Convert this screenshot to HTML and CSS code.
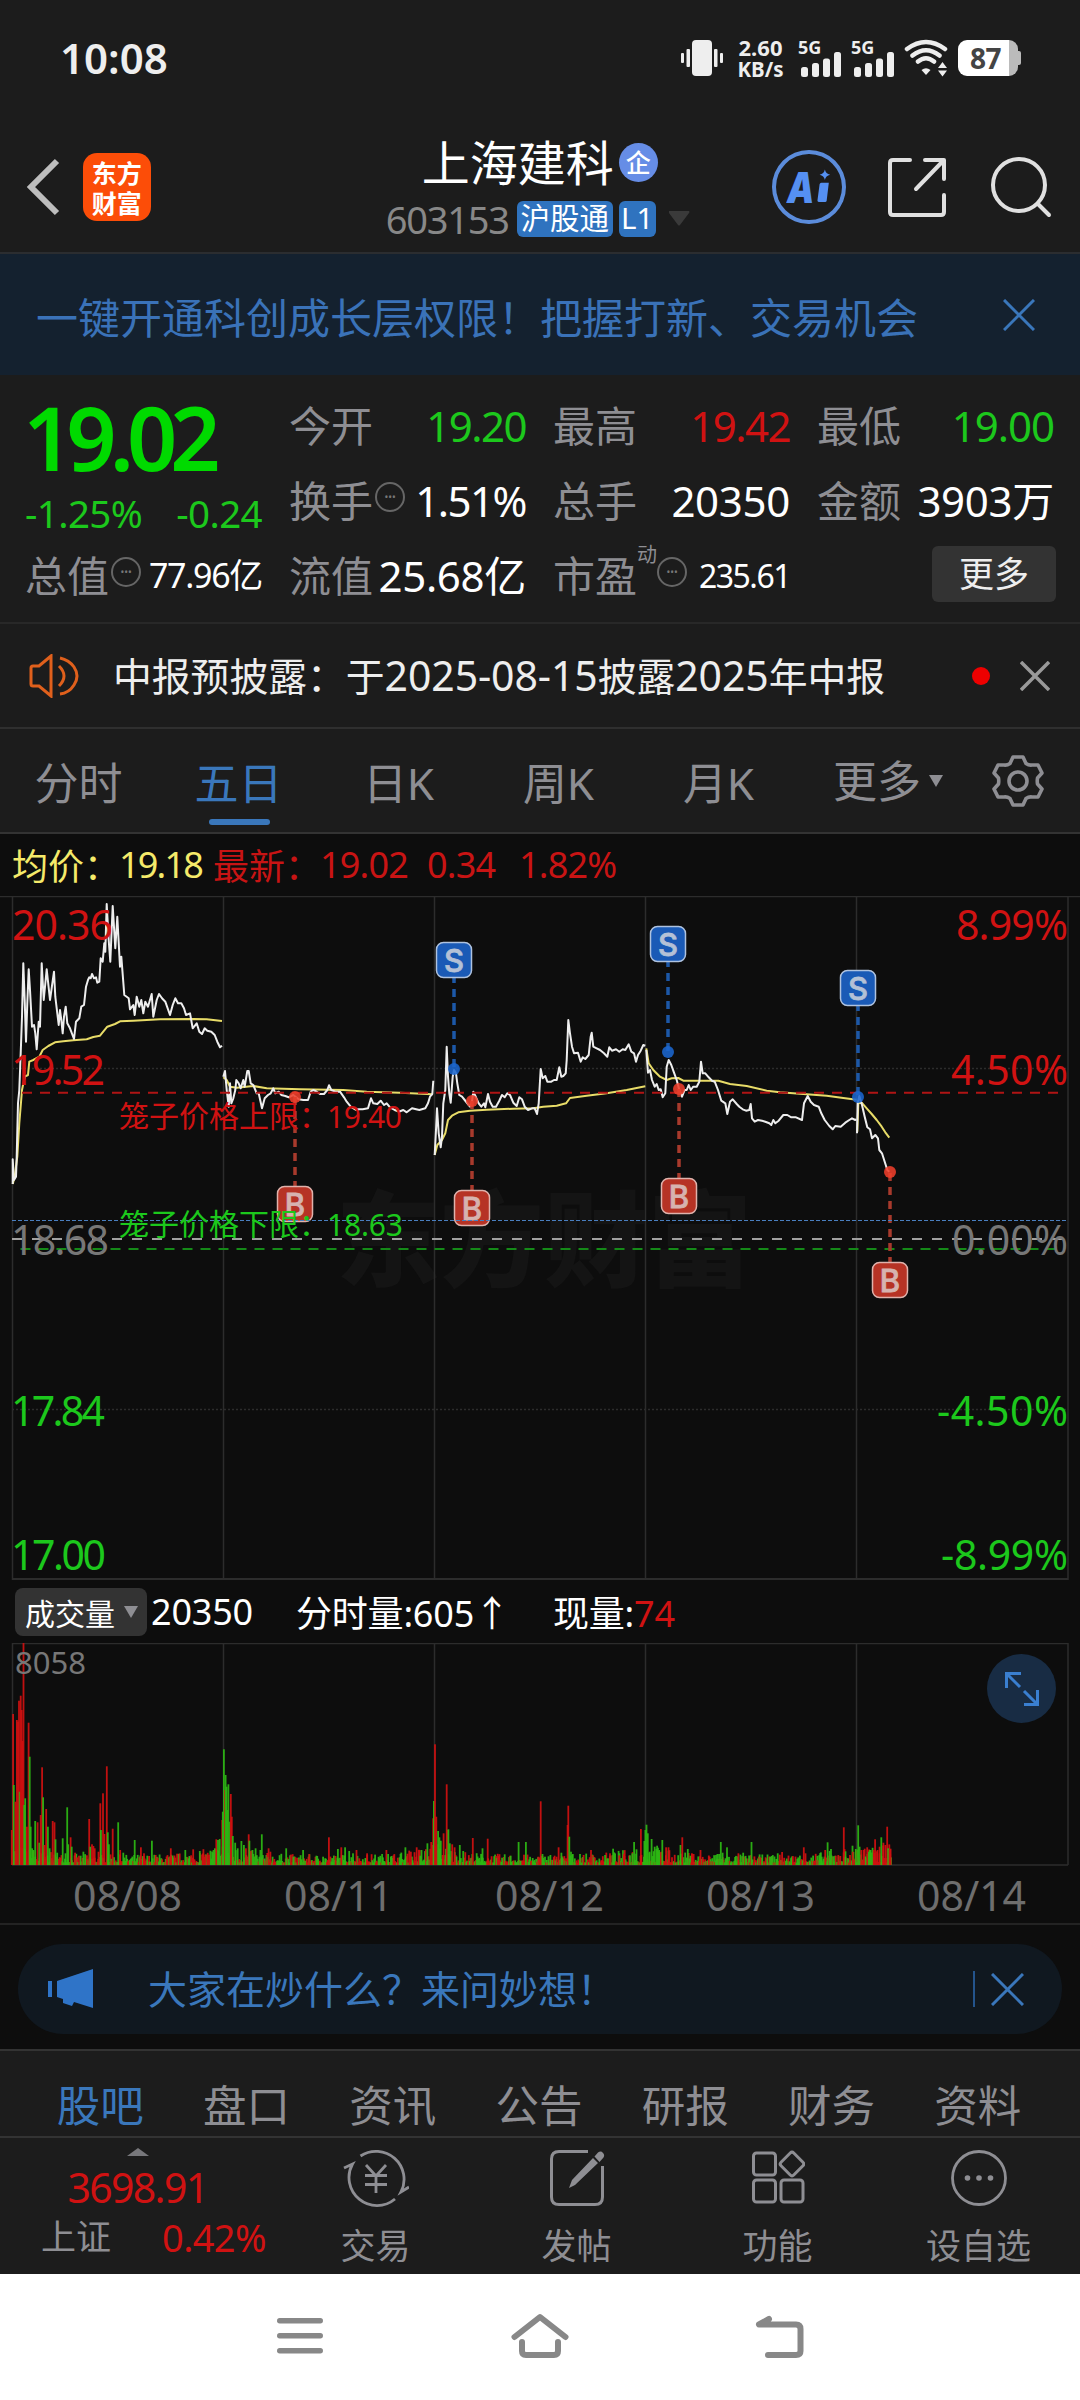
FILE: index.html
```
<!DOCTYPE html>
<html lang="zh-CN">
<head>
<meta charset="utf-8">
<title>上海建科 603153</title>
<link rel="stylesheet" href="styles.css">
</head>
<body>
<div class="status">
  <span class="clock">10:08</span>
  <div class="status-right">
    <svg class="vibrate" width="42" height="36" viewBox="0 0 42 36" fill="#eee"><rect x="11" width="20" height="36" rx="4"/><rect x="0" y="13" width="3" height="10" rx="1"/><rect x="5.500" y="9" width="3.500" height="18" rx="1"/><rect x="33" y="9" width="3.500" height="18" rx="1"/><rect x="39" y="13" width="3" height="10" rx="1"/></svg>
    <span class="speed"><b>2.60</b><b>KB/s</b></span>
    <span class="signal"><b>5G</b><svg width="40" height="26" viewBox="0 0 40 26" fill="#eee"><rect y="15" width="7" height="10" rx="2.500"/><rect x="11" y="11" width="7" height="14" rx="2.500"/><rect x="22" y="6.500" width="7" height="18.500" rx="2.500"/><rect x="33" y="0" width="7" height="25" rx="2.500"/></svg></span>
    <span class="signal"><b>5G</b><svg width="40" height="26" viewBox="0 0 40 26" fill="#eee"><rect y="15" width="7" height="10" rx="2.500"/><rect x="11" y="11" width="7" height="14" rx="2.500"/><rect x="22" y="6.500" width="7" height="18.500" rx="2.500"/><rect x="33" y="0" width="7" height="25" rx="2.500"/></svg></span>
    <svg class="wifi" width="44" height="38" viewBox="0 0 44 38" fill="none" stroke="#eee" stroke-width="4.500" stroke-linecap="round"><path d="M3 10Q22-4 41 10M8.500 16.500Q22 6 35.500 16.500M14 22.500Q22 16 30 22.500"/><path d="M17.500 31Q22 27.500 26.500 31L22 36z" fill="#eee" stroke="none"/><path d="M34 29l4.500-6 4.500 6zM34 31.500l4.500 6 4.500-6z" fill="#eee" stroke="none"/></svg>
    <span class="battery"><b>87</b><i></i></span>
  </div>
</div>

<header class="header">
  <svg class="back" width="34" height="58" viewBox="0 0 34 58" fill="none" stroke="#bdbdbd" stroke-width="6"><path d="M31 3L5 29l26 26"/></svg>
  <div class="logo"><span>东方</span><span>财富</span></div>
  <div class="title">
    <div class="name">上海建科<span class="corp">企</span></div>
    <div class="code"><span class="code-num">603153</span><span class="tag">沪股通</span><span class="tag tag-l1">L1</span><svg width="22" height="15" viewBox="0 0 22 15"><path d="M1 0h20q1 1 0 2L12 14q-1 1-2 0L1 2z" fill="#3a3a3a"/></svg></div>
  </div>
  <div class="ai"><b>A</b><svg width="14" height="40" viewBox="0 0 16 40" fill="#5590f2"><path d="M9 0Q10 5 15 6Q10 7 9 12Q8 7 3 6Q8 5 9 0zM5 15h8.500l-2.500 21q-.5 1-1.500 1H2q-1.500 0-1.500-1.500l2.500-19Q4 15 5 15z"/></svg></div>
  <svg class="share" width="60" height="60" viewBox="0 0 60 60" fill="none" stroke="#e0e0e0" stroke-width="4" stroke-linecap="round" stroke-linejoin="round"><path d="M23 3H6Q3 3 3 6v49q0 3 3 3h48q3 0 3-3V38M38 3h19v19M56 4L29 32"/></svg>
  <svg class="search" width="62" height="62" viewBox="0 0 62 62" fill="none" stroke="#e0e0e0" stroke-width="4" stroke-linecap="round"><circle cx="29" cy="29" r="26"/><path d="M48 48l11 11"/></svg>
</header>

<div class="promo"><span>一键开通科创成长层权限！把握打新、交易机会</span><svg width="32" height="32" viewBox="0 0 32 32" stroke="#3a77bb" stroke-width="3"><path d="M1 1l30 30M31 1L1 31"/></svg></div>

<section class="quote">
  <div class="price"><div class="now">19.02</div><div class="chg"><span>-1.25%</span><span>-0.24</span></div></div>
  <div class="cell"><label>今开</label><span class="green n1">19.20</span></div>
  <div class="cell"><label>最高</label><span class="red n1">19.42</span></div>
  <div class="cell"><label>最低</label><span class="green n2">19.00</span></div>
  <div class="cell"><label>换手</label><i class="dots">•••</i><span class="n3">1.51%</span></div>
  <div class="cell"><label>总手</label><span>20350</span></div>
  <div class="cell"><label>金额</label><span>3903万</span></div>
  <div class="cell"><label>总值</label><i class="dots">•••</i><span class="s1">77.96亿</span></div>
  <div class="cell"><label>流值</label><span>25.68亿</span></div>
  <div class="cell"><label>市盈</label><sup>动</sup><i class="dots pe">•••</i><span class="s2">235.61</span></div>
  <div class="cell"><button>更多</button></div>
</section>

<div class="notice">
  <svg width="52" height="44" viewBox="0 0 52 44" fill="none" stroke="#e0601c" stroke-width="3"><path d="M22 2L10 12H4q-2 0-2 2v16q0 2 2 2h6l12 10zM30 12q10 10 0 20M31 4q9 2 14 9 6 9 0 18-5 8-14 9"/></svg>
  <span>中报预披露：于<b>2025-08-15</b>披露<b>2025</b>年中报</span>
  <i></i>
  <svg width="30" height="30" viewBox="0 0 30 30" stroke="#999" stroke-width="3.500"><path d="M1 1l28 28M29 1L1 29"/></svg>
</div>

<nav class="periods">
  <a>分时</a><a class="on">五日</a><a>日K</a><a>周K</a><a>月K</a>
  <a class="more">更多<svg width="14" height="12" viewBox="0 0 14 12"><path d="M0 0h14L7 12z" fill="#8e8e93"/></svg></a>
  <svg class="gear" width="54" height="54" viewBox="-27 -27 54 54" fill="none" stroke="#8e8e93" stroke-width="3.600" stroke-linejoin="round"><path d="M-5-24H5L8-17.500Q11-15.500 14-16L20-16 24-8 19.500-3Q19 0 19.500 3L24 8 20 16 14 16Q11 15.500 8 17.500L5 24H-5L-8 17.500Q-11 15.500-14 16L-20 16-24 8-19.500 3Q-19 0-19.500-3L-24-8-20-16-14-16Q-11-15.500-8-17.500z"/><circle r="9"/></svg>
</nav>

<div class="legend"><span class="yellow w1">均价：</span><span class="yellow w2">19.18</span><span class="w3">最新：</span><span class="w4">19.02</span><span class="w5">0.34</span><span>1.82%</span></div>

<svg class="chart" width="1080" height="684" viewBox="0 896 1080 684">
  <text class="watermark" x="336" y="1279" textLength="416">东方财富</text>
  <path class="grid" d="M0 896.500H1080M12.500 897V1580M223.500 897V1580M434.500 897V1580M645.500 897V1580M856.500 897V1580M1068 897V1580"/>
  <path class="grid dotted" d="M12 1068.500H1068M12 1409.500H1068"/>
  <path class="grid base" d="M12 1580H1068"/>
  <path d="M12 1239H1068" stroke="#a0a0a0" stroke-width="2" stroke-dasharray="10 10"/>
  <path d="M20.500 1249H1060" stroke="#158a18" stroke-width="2" stroke-dasharray="10 8"/>
  <g id="avg" class="avg"></g>
  <g id="line" class="line"></g>
  <path d="M22 1092.700H1060" stroke="#b01414" stroke-width="2" stroke-dasharray="10 8"/>
  <g id="marks"></g>
  <path d="M12 1220.500H1068" stroke="#4a7fc0" stroke-width="1.200" stroke-dasharray="4 2"/>
  <g class="axis">
    <text class="r" x="12" y="940" textLength="101">20.36</text><text class="r" x="11" y="1085" textLength="94">19.52</text><text x="11" y="1255" textLength="98">18.68</text><text class="g" x="11" y="1426" textLength="94">17.84</text><text class="g" x="11" y="1570" textLength="95">17.00</text>
    <text class="r" x="956" y="940" textLength="112">8.99%</text><text class="r" x="951" y="1085" textLength="117">4.50%</text><text x="952" y="1255" textLength="116">0.00%</text><text class="g" x="937" y="1426" textLength="131">-4.50%</text><text class="g" x="941" y="1570" textLength="127">-8.99%</text>
  </g>
  <g class="limits"><text class="r" x="119" y="1127">笼子价格上限：</text><text class="r" x="327" y="1127.500" textLength="75">19.40</text><text class="g" x="119" y="1235">笼子价格下限：</text><text class="g" x="327" y="1235.500" textLength="76">18.63</text></g>
</svg>

<div class="vol-head"><span class="pick">成交量<svg width="14" height="12" viewBox="0 0 14 12"><path d="M0 0h14L7 12z" fill="#8e8e93"/></svg></span><span class="v1">20350</span><span class="v2">分时量:605↑</span><span class="v3">现量:<em>74</em></span></div>

<div class="volume">
  <svg width="1080" height="224" viewBox="0 1643 1080 224">
    <path class="grid" d="M12 1643.500H1068M12.500 1643V1865M223.500 1643V1865M434.500 1643V1865M645.500 1643V1865M856.500 1643V1865M1068 1643V1865M12 1865H1068"/>
    <g id="bars"></g>
    <text class="vmax" x="15" y="1674" textLength="71">8058</text>
  </svg>
  <div class="expand"><svg width="34" height="34" viewBox="0 0 34 34" fill="none" stroke="#3a7fd0" stroke-width="3"><path d="M16 1.500H1.500V16M2 2l13 13M19 32.500h13.500V18M32 32L19 19"/></svg></div>
</div>
<div class="dates"><span>08/08</span><span>08/11</span><span>08/12</span><span>08/13</span><span>08/14</span></div>

<div class="ask-wrap"><div class="ask">
  <svg width="46" height="40" viewBox="0 0 46 40" fill="#2f74c8"><path d="M0 12h4v16H0zM9 12L45 0v39l-19-6-2 4-9-3v-4l-6-2z"/></svg>
  <span>大家在炒什么？来问妙想！</span><u></u>
  <svg width="33" height="33" viewBox="0 0 33 33" stroke="#3a77bb" stroke-width="3"><path d="M1 1l31 31M32 1L1 32"/></svg>
</div></div>

<nav class="sections"><a class="on">股吧</a><a>盘口</a><a>资讯</a><a>公告</a><a>研报</a><a>财务</a><a>资料</a></nav>

<nav class="actions">
  <div class="index"><svg width="22" height="8" viewBox="0 0 22 8"><path d="M11 0l11 8H0z" fill="#77777b"/></svg><strong>3698.91</strong><div><span>上证</span><em>0.42%</em></div></div>
  <a><svg width="66" height="60" viewBox="0 0 66 60" fill="none" stroke="#8e8e93" stroke-width="2.800"><path d="M17.500 8A28 28 0 0 1 58 44L66 39M52 51A28 28 0 0 1 9.500 16L1 20"/><path d="M23 17l10 11L43 17M22 27.500h22M22 36.500h22M33 27v18"/></svg>交易</a>
  <a><svg width="56" height="60" viewBox="0 0 56 60" fill="none" stroke="#8e8e93" stroke-width="3"><path d="M39 3.500H10Q2.500 3.500 2.500 11v38q0 7.500 7.500 7.500h36q7.500 0 7.500-7.500V18"/><path d="M44 10l5 5L26 37l-6 3 3-8zM45.500 8.500l3.500-4q3-2 5 .5 2 2 .5 4.500L50.500 14z" fill="#8e8e93" stroke="none"/></svg>发帖</a>
  <a><svg width="54" height="60" viewBox="0 0 54 60" fill="none" stroke="#8e8e93" stroke-width="3"><rect x="2.500" y="5" width="22" height="22" rx="3"/><rect x="2.500" y="32" width="22" height="22" rx="3"/><rect x="30" y="32" width="22" height="22" rx="3"/><rect x="32" y="7" width="18" height="18" rx="2.500" transform="rotate(45 41 16)"/></svg>功能</a>
  <a><svg width="58" height="60" viewBox="0 0 58 60" fill="#8e8e93"><circle cx="29" cy="30" r="26.500" fill="none" stroke="#8e8e93" stroke-width="2.800"/><circle cx="17.500" cy="30" r="2.800"/><circle cx="29" cy="30" r="2.800"/><circle cx="40.500" cy="30" r="2.800"/></svg>设自选</a>
</nav>

<nav class="system">
  <svg width="46" height="44" viewBox="0 0 46 44" fill="#888"><rect y="4" width="46" height="5.500" rx="2.700"/><rect y="19" width="46" height="5.500" rx="2.700"/><rect y="34" width="46" height="5.500" rx="2.700"/></svg>
  <svg width="58" height="48" viewBox="0 0 58 48" fill="none" stroke="#888" stroke-width="6" stroke-linecap="round" stroke-linejoin="round"><path d="M3.500 25L29 5l25.500 20"/><path d="M11 30v9q0 4 4 4h28q4 0 4-4v-9"/></svg>
  <svg width="50" height="48" viewBox="0 0 50 48" fill="none" stroke="#888" stroke-width="6" stroke-linecap="round" stroke-linejoin="round"><path d="M14 7L4 12.500h37q4.500 0 4.500 4.500v22q0 4-4.500 4H13"/></svg>
</nav>
<script src="chart.js"></script>
</body>
</html>
```
FILE: styles.css
```
* { box-sizing: border-box; }
body { margin: 0; width: 1080px; background: #1c1c1c; color: #fff; font-family: "Noto Sans", "Noto Sans CJK SC", sans-serif; font-weight: 400; }
svg { display: block; flex: none; }
i, em { font-style: normal; }
.green { color: #1cc81c; }
.red { color: #d01212; }

.status { height: 115px; padding: 0 59px 0 60px; display: flex; justify-content: space-between; align-items: center; }
.clock { font-size: 42px; font-weight: 600; color: #eee; letter-spacing: 0; }
.status-right { display: flex; align-items: center; height: 40px; }
.speed { margin-left: 14px; width: 47px; display: flex; flex-direction: column; align-items: center; font-size: 20.500px; line-height: 22px; color: #eee; }
.speed b:first-child { font-size: 22px; }
.signal { position: relative; width: 43px; margin-left: 14px; height: 40px; display: flex; align-items: flex-end; justify-content: flex-end; }
.signal + .signal { margin-left: 10px; }
.signal b { position: absolute; left: 0; top: 0; font-size: 18px; line-height: 18px; color: #eee; }
.wifi { margin-left: 10px; }
.battery { margin-left: 10px; width: 63px; display: flex; align-items: center; }
.battery b { width: 60px; height: 36px; border-radius: 9px; background: linear-gradient(90deg, #fff 51px, #bbb 51px); color: #444; font-size: 28px; line-height: 36px; padding-left: 12px; letter-spacing: -.5px; }
.battery i { width: 3px; height: 14px; background: #bbb; border-radius: 0 2px 2px 0; }

.header { height: 139px; border-bottom: 2px solid #2b2d30; display: flex; align-items: center; padding: 6px 28px 0 26px; }
.logo { margin-left: 23px; width: 68px; height: 68px; border-radius: 14px; background: #fc4d08; display: flex; flex-direction: column; align-items: center; justify-content: center; font-family: "Noto Sans CJK SC", sans-serif; font-size: 25px; line-height: 30px; font-weight: 700; }
.title { margin-left: 153px; width: 471px; display: flex; flex-direction: column; }
.name { font-size: 48px; line-height: 66px; display: flex; align-items: center; padding-left: 118px; margin-top: -7px; }
.corp { margin-left: 5px; width: 39px; height: 39px; border-radius: 50%; background: #668de6; font-size: 25px; line-height: 38px; font-weight: 500; text-align: center; }
.code { display: flex; align-items: center; padding-left: 82px; height: 36px; margin-top: 5px; font-size: 38px; color: #888; }
.code-num { width: 131px; letter-spacing: -1.200px; }
.tag { height: 36px; width: 96px; border-radius: 6px; background: #2f73bf; color: #fff; font-size: 29.500px; line-height: 34px; text-align: center; }
.tag-l1 { width: 37px; margin: 0 12px 0 6px; }
.ai { width: 74px; height: 74px; border: 4px solid #5b8cdb; border-radius: 50%; display: flex; align-items: center; justify-content: center; color: #5590f2; }
.ai b { width: 30px; font: italic 900 43px/40px "Inter", sans-serif; transform: scaleX(.8); transform-origin: 0 50%; }
.share { margin-left: 41px; }
.search { margin-left: 43px; }

.promo { height: 121px; background: #14212f; color: #3a72b8; display: flex; align-items: center; justify-content: space-between; padding: 0 45px 0 36px; font-size: 42px; }
.promo span { padding-top: 1px; }

.quote { height: 249px; padding: 13px 26px 0; border-bottom: 2px solid #282828; display: grid; grid-template-columns: repeat(4, 236px); grid-auto-rows: 75px; column-gap: 28px; }
.price { grid-row: span 2; color: #00da00; }
.now { font-size: 88px; font-weight: 600; line-height: 98px; letter-spacing: -7px; margin-left: -3px; }
.chg { display: flex; justify-content: space-between; font-size: 38.500px; line-height: 50px; margin: 2px 0 0 -1px; letter-spacing: -.6px; color: #1cc81c; }
.cell { display: flex; align-items: center; font-size: 42px; white-space: nowrap; line-height: 75px; }
.cell label { color: #8e8e93; margin-left: -1px; }
.cell span { margin-left: auto; letter-spacing: -.3px; }
.cell .n1 { letter-spacing: -1.500px; }
.cell .n2 { letter-spacing: -1px; }
.cell .n3 { letter-spacing: -1.500px; }
.cell .s1 { font-size: 34px; letter-spacing: -1.300px; }
.cell .s2 { font-size: 32px; letter-spacing: -1.500px; }
.dots { width: 30px; height: 30px; flex: none; margin: -8px 0 0 2px; border: 2px solid #666; border-radius: 50%; font-size: 10px; line-height: 26px; text-align: center; color: #777; }
.cell sup { font-size: 20px; line-height: 20px; color: #8e8e93; align-self: flex-start; margin-top: 7px; }
.dots.pe { margin-left: 0; margin-right: 8px; }
.cell button { margin-left: auto; margin-top: -4px; margin-right: -2px; width: 124px; height: 56px; border: 0; border-radius: 6px; background: #333; color: #eee; font: 35px/50px "Noto Sans CJK SC", sans-serif; padding: 0 0 4px; }

.notice { height: 105px; border-bottom: 2px solid #2f2f2f; display: flex; align-items: center; padding: 0 30px 0 29px; font-size: 38.800px; color: #eee; white-space: nowrap; }
.notice span { margin: -3px 0 0 32px; width: 859px; }
.notice b { font-weight: 400; font-size: 41px; letter-spacing: -.1px; }
.notice i { width: 18px; height: 18px; border-radius: 50%; background: #ee0000; margin-right: 30px; }

.periods { height: 105px; border-bottom: 2px solid #333; display: flex; align-items: center; font-size: 44px; color: #8e8e93; }
.periods a { width: 160px; height: 103px; line-height: 108px; text-align: center; position: relative; padding-right: 3px; }
.periods .on { color: #3a77bb; }
.periods .on::after { content: ""; position: absolute; left: 49px; bottom: 7px; width: 61px; height: 6px; border-radius: 3px; background: #3a77bb; }
.periods .more { display: flex; align-items: center; width: 191px; padding-left: 33px; }
.more svg { margin-left: 8px; }

.legend { height: 62px; background: #0d0d0d; display: flex; align-items: center; padding: 0 0 2px 12px; font-size: 36px; color: #c81414; white-space: nowrap; letter-spacing: -.8px; }
.legend .yellow { color: #f5ea6a; }
.legend .w1, .legend .w3 { width: 107px; letter-spacing: 0; }
.legend .w2 { width: 94px; letter-spacing: -1.800px; }
.w4 { width: 107px; }
.w5 { width: 92px; }

.chart { background: #0d0d0d; }
.grid { fill: none; stroke: #2c2c2c; stroke-width: 1.500; }
.dotted { stroke-dasharray: 2 2; }
.base { stroke-width: 4; }
.watermark { font: 900 104px "Noto Sans CJK SC", sans-serif; fill: #141414; }
.avg, .line { fill: none; stroke-width: 2; stroke-linejoin: round; }
.avg { stroke: #e8dc68; }
.line { stroke: #eee; }
.axis { font-size: 41px; fill: #777; }
.limits { font-size: 30px; }
.r { fill: #d01212; }
.g { fill: #1cc81c; }
.mark { font: 500 31px "Inter", sans-serif; text-anchor: middle; }

.vol-head { height: 63px; background: #0d0d0d; display: flex; align-items: center; font-size: 36px; padding-left: 15px; white-space: nowrap; letter-spacing: -.2px; }
.pick { width: 132px; height: 48px; border-radius: 8px; background: #333; display: flex; align-items: center; justify-content: space-between; padding: 0 9px 0 10px; font-size: 30px; letter-spacing: 0; }
.v1 { width: 146px; padding-left: 4px; }
.v2 { width: 260px; padding-left: 3px; }
.v3 em { color: #d01212; }
.volume { height: 224px; background: #0d0d0d; position: relative; }
.vmax { font-size: 31px; fill: #777; }
.expand { position: absolute; left: 987px; top: 11px; width: 69px; height: 69px; border-radius: 50%; background: #182c44; display: flex; align-items: center; justify-content: center; }
.dates { height: 58px; background: #0d0d0d; display: flex; font-size: 41px; line-height: 57px; color: #6e6e6e; padding-left: 12px; border-bottom: 2px solid #232323; }
.dates span { width: 211px; padding-left: 61px; letter-spacing: 0; }

.ask-wrap { background: #0d0d0d; height: 126px; padding: 19px 18px 0; border-bottom: 2px solid #333; }
.ask { height: 90px; border-radius: 45px; background: #101820; display: flex; align-items: center; padding: 0 38px 0 30px; font-size: 39px; color: #3a77bb; }
.ask span { margin: -5px 0 0 54px; flex: 1; }
.ask u { width: 2px; height: 36px; background: #24548c; margin-right: 16px; }

.sections { height: 87px; border-bottom: 2px solid #333; padding: 19px 29px 0 27px; display: flex; font-size: 43.500px; line-height: 70px; color: #8e8e93; }
.sections a { flex: 1; text-align: center; }
.sections .on { color: #3a77bb; }

.actions { height: 136px; display: flex; color: #8e8e93; }
.actions > a { width: 201px; display: flex; flex-direction: column; align-items: center; padding-top: 10px; font-size: 35px; line-height: 46px; }
.actions > a svg { margin-bottom: 15px; }
.index { width: 275px; display: flex; flex-direction: column; align-items: center; padding-top: 10px; }
.index strong { font-size: 41px; line-height: 44px; font-weight: 400; color: #d01212; margin-top: 9px; letter-spacing: -1.700px; }
.index div { display: flex; align-items: center; width: 100%; padding-left: 41px; height: 48px; margin-top: 4px; font-size: 35px; line-height: 48px; }
.index span { width: 121px; }
.index em { font-size: 38px; color: #d01212; letter-spacing: -.6px; }

.system { height: 126px; background: #fff; display: grid; grid-template-columns: repeat(3, 240px); justify-content: center; justify-items: center; align-items: center; padding-bottom: 2px; }
```
FILE: chart.js
```
const NS = 'http://www.w3.org/2000/svg';
const add = (parent, name, attrs, text) => {
  const el = document.createElementNS(NS, name);
  for (const k in attrs) el.setAttribute(k, attrs[k]);
  if (text) el.textContent = text;
  parent.appendChild(el);
};
const $ = id => document.getElementById(id);

// One series per trading day, stored in thirds of a pixel from (origin, 890).
const price = [
  [0, '38,882 38,808 42,870 48,860 50,800 54,640 58,600 62,490 66,380 70,220 74,330 78,455 82,340 86,238 90,300 96,410 102,405 106,430 110,478 116,395 120,410 125,220 131,330 140,238 150,330 162,245 166,320 172,370 176,405 180,360 184,390 188,430 192,380 197,350 202,400 210,415 222,447 228,395 238,385 244,350 252,345 258,290 264,270 268,262 272,265 276,252 282,265 288,262 292,278 298,275 302,205 308,215 313,160 316,185 320,42 326,150 331,215 338,48 346,175 352,80 360,230 364,200 373,315 386,325 390,358 400,345 404,375 410,320 418,350 424,330 430,370 436,335 444,350 455,312 460,380 470,330 477,312 486,325 496,335 510,375 518,345 526,325 534,340 544,340 552,355 558,375 570,370 578,415 590,400 598,425 606,432 614,415 622,422 634,425 644,435 652,455 660,472 666,467'],
  [0, '670,560 675,543 680,600 686,650 690,580 694,640 700,625 706,600 709,570 716,580 722,595 730,570 734,590 742,543 746,543 752,580 760,585 770,610 776,610 786,655 794,625 804,615 812,610 820,595 826,610 836,605 844,615 856,618 866,622 880,615 896,628 910,630 924,630 932,605 940,600 950,605 960,612 972,612 982,600 987,586 994,600 1006,605 1020,605 1032,622 1040,635 1052,650 1068,660 1076,658 1088,658 1104,655 1113,625 1120,640 1132,642 1142,632 1152,645 1160,640 1170,652 1184,660 1196,665 1210,660 1220,667 1236,655 1258,660 1276,655 1284,640 1290,620 1297,612 1300,572'],
  [420, '44,795 48,720 51,655 56,730 62,772 66,740 70,640 76,600 80,470 84,560 88,610 92,638 98,560 102,540 108,550 112,580 118,615 126,620 134,630 142,640 150,650 155,640 160,605 168,622 176,640 184,650 192,640 196,652 204,612 210,635 218,650 228,650 238,632 246,615 254,622 262,610 270,615 280,638 290,648 298,622 306,628 314,650 324,660 336,655 344,655 351,672 356,640 362,537 368,565 376,558 382,575 394,575 402,570 410,570 418,532 424,560 430,558 437,550 440,510 445,390 450,430 456,470 462,490 474,488 482,515 488,502 496,507 506,495 512,440 515,428 520,470 530,475 540,480 552,490 562,500 568,472 576,482 588,478 598,485 608,478 616,480 626,463 634,485 642,490 648,515 654,495 662,482 670,465 676,467'],
  [420, '679,480 684,548 690,540 696,570 704,590 710,582 716,600 722,598 728,622 736,610 740,530 746,510 754,525 762,548 770,570 778,600 786,620 794,600 800,600 806,585 812,600 820,590 830,590 838,575 843,515 848,550 856,550 866,562 876,572 884,575 894,600 904,632 916,640 922,672 930,635 938,628 950,642 958,650 968,658 978,662 988,660 992,642 996,685 1004,695 1014,690 1026,692 1036,695 1048,700 1054,705 1060,690 1066,700 1076,692 1090,675 1102,675 1114,682 1128,682 1146,690 1152,640 1163,618 1172,635 1182,645 1196,650 1204,670 1214,690 1228,708 1238,718 1246,708 1262,710 1276,698 1288,690 1296,685 1306,690 1309,688'],
  [420, '1311,730 1313,640 1318,618 1326,645 1334,680 1342,712 1350,718 1356,745 1366,735 1374,745 1378,780 1386,790 1394,815 1402,840 1408,845']
];
const average = [
  [0, '38,882 44,860 52,800 58,700 66,600 74,560 84,555 88,515 100,510 118,500 128,480 145,468 165,457 190,454 220,451 260,448 280,441 300,437 322,410 345,402 360,394 400,392 480,388 580,387 620,388 666,393'],
  [0, '670,562 680,570 690,590 710,593 760,588 800,595 900,598 1030,600 1100,605 1200,608 1297,613'],
  [420, '44,795 52,765 66,750 76,730 84,690 96,677 115,667 150,662 200,659 280,656 340,655 370,650 410,647 438,640 450,624 500,617 560,610 620,600 676,589'],
  [420, '679,475 686,520 700,540 720,560 740,570 755,565 775,564 790,572 830,572 895,572 930,582 980,588 1040,602 1080,607 1150,612 1220,617 1270,624 1310,629'],
  [420, '1312,725 1315,640 1325,638 1340,655 1355,672 1370,690 1385,710 1396,727 1408,743']
];
const plot = (group, days) => days.forEach(([origin, pts]) => add(group, 'polyline', {
  points: pts.split(' ').map(p => {
    const [x, y] = p.split(',');
    return (origin + x / 3).toFixed(1) + ',' + (890 + y / 3).toFixed(1);
  }).join(' ')
}));
plot($('avg'), average);
plot($('line'), price);

// Buy and sell marks: kind, x, badge centre y, dot y.
[['B', 295, 1204, 1097], ['B', 472, 1208, 1101], ['B', 679, 1196, 1089], ['B', 890, 1280, 1172],
 ['S', 454, 960, 1069], ['S', 668, 944, 1052], ['S', 858, 988, 1097]].forEach(([k, x, y, dot]) => {
  const buy = k === 'B', g = $('marks');
  add(g, 'path', { d: `M${x} ${buy ? y - 18 : y + 18}V${dot}`, stroke: buy ? '#a83a2c' : '#1c58a8', 'stroke-width': 3.5, 'stroke-dasharray': '5 6 8 6 8 6 8 6 8 6 8 6 8 6 8 6 8 6 8 6' });
  add(g, 'circle', { cx: x, cy: dot, r: 6, fill: buy ? '#ee3f2b' : '#1b66cf', 'fill-opacity': .88 });
  add(g, 'rect', { x: x - 17.500, y: y - 17.500, width: 35, height: 35, rx: 7, fill: buy ? '#b63325' : '#1a5ab6', stroke: buy ? '#dfb2ac' : '#aec2df', 'stroke-width': 1.5 });
  add(g, 'text', { class: 'mark', x, y: y + 11.500, fill: buy ? '#d6b3af' : '#b4c1d6', stroke: buy ? '#d6b3af' : '#b4c1d6', 'stroke-width': .8 }, k);
});

// Volume: minute-level background bars, then the notable bars on top.
const bars = $('bars'), red = '#d01010', green = '#2cb814';
let seed = 7;
const rnd = () => (seed = (seed * 16807) % 2147483647) / 2147483647;
const bar = (x, h, c) => add(bars, 'rect', { x: x.toFixed(1), y: (1865 - h).toFixed(1), width: 1.8, height: h.toFixed(1), fill: c, 'fill-opacity': .92 });
const busy = [12, 223, 434, 645, 857, 890];
for (let x = 11.5; x < 891; x += .876) {
  const near = Math.min(...busy.map(b => Math.abs(x - b)));
  bar(x, 2.5 + Math.pow(rnd(), 2) * (8 + 14 * Math.exp(-near / 22)), rnd() < .5 ? red : green);
}
const spikes = [
  [0, '34,600r 38,252r 40,465g 45,515r 49,270r 52,275r 55,212r 57,485g 60,197r 63,240r 65,333r 68,39r 70,525g 73,505g 78,590r 83,278r 86,380g 89,590g 93,655g 97,660g 102,573g 109,577r 114,638g 118,555r 122,412r 125,502g 129,645r 134,537r 139,590g 144,655g 153,573r 158,577r 161,628g 166,668g 182,625g 190,670g 195,532g 198,643g 205,622r 208,650g 218,668r 242,665g 259,567r 262,650g 267,643r 271,648r 275,655r 286,665r 291,520r 293,600g 299,490r 303,612r 310,409r 313,607g 316,643g 327,596r 343,577g 349,660r 358,668g 391,630g 409,652r 418,670r 441,632g 452,675r 496,655r 538,660g 561,658r 580,663g 590,670r 596,674r 602,676r 607,674r 620,660g 624,655g 628,628r 633,630g 638,627g 645,570r 647,545g 650,358g 653,480r 655,435g 658,470g 660,540g 663,463g 667,575g 670,492r 673,560r 676,618g 683,638g 690,655g 701,633g 708,645g 714,655r 722,613r 724,632g 733,660g 742,655g 756,660g 760,613g 780,655r 785,665r 831,655g 852,680g 880,660g 898,672r 938,680g 955,622r 981,657g 991,652r 1002,652g 1014,663g 1025,670g 1035,660r 1066,670r 1122,660r 1127,672g 1177,652g 1193,665r 1210,652r 1220,677g 1241,640g 1252,636r 1258,565r 1260,513g 1263,343r 1267,560r 1272,603g 1276,622g 1280,632g 1288,610r 1297,463r 1299,600r 1302,598g 1306,640g 1313,643r 1320,652r 1335,645g 1345,663g 1373,624r 1401,655g 1416,626r 1483,677g 1506,636g 1527,636g 1563,680r'],
  [540, '2,514r 7,672g 30,675g 48,680r 54,652r 62,668g 80,585r 82,527r 85,620g 90,665g 95,672g 116,672g 148,660r 189,675g 203,670r 212,656g 230,676r 245,678r 268,670g 273,636g 280,658g 293,597r 303,633g 306,600g 309,584g 313,610g 318,665g 324,627g 333,650g 340,647g 346,660g 355,630g 366,652r 373,652r 408,645g 413,622r 429,657g 441,670r 446,672r 466,660r 511,675g 515,672g 520,672g 525,636g 530,668g 543,652g 576,670r 590,668g 614,636g 640,682r 655,682r 672,678g 690,670g 703,666r 729,683g 766,652r 771,670r 818,680g 828,660r 835,637g 845,657g 866,675r 872,678r 882,592r 887,680g 900,675r 908,665r 917,657g 924,586g 928,650g 933,660r 940,660r 950,652r 955,665g 960,660g 969,660r 973,628r 980,660r 986,650r 991,622g 997,638r 1003,645r 1008,590r 1011,655g 1015,660r 1018,656r']
];
spikes.forEach(([origin, list]) => list.split(' ').forEach(s => {
  const [, x, y, c] = s.match(/(\d+),(\d+)(.)/);
  bar(origin + x / 2.904 - .85, (705 - y) / 3, c === 'r' ? red : green);
}));
```
